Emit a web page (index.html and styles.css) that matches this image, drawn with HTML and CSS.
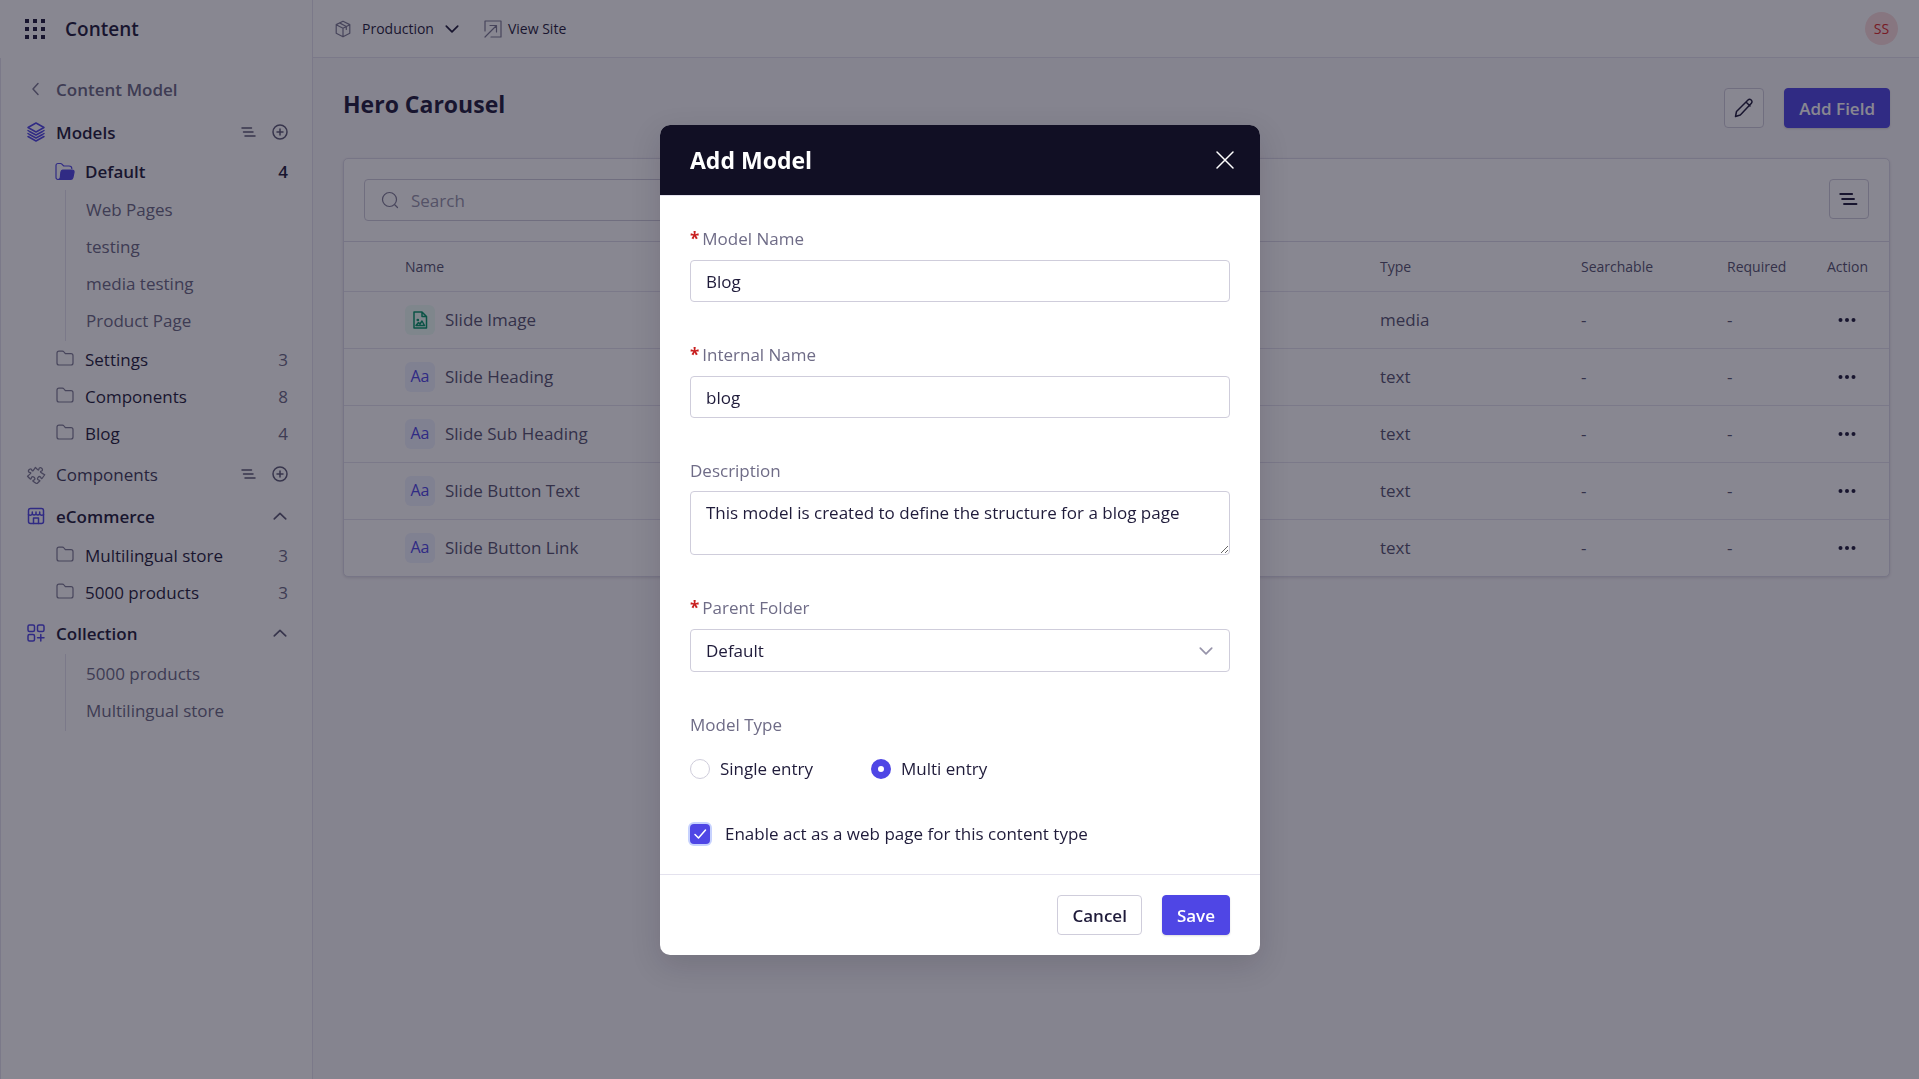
FILE: index.html
```html
<!DOCTYPE html>
<html lang="en">
<head>
  <meta charset="UTF-8">
  <meta name="viewport" content="width=device-width, initial-scale=1">
  <title>Content - Hero Carousel</title>
  <link rel="stylesheet" href="styles.css">
</head>
<body>

  <!-- Shared icons -->
  <svg class="sprite" aria-hidden="true">
    <symbol id="i-folder" viewBox="0 0 20 20">
      <path d="M2 5.200C2 4 2.800 3.200 4 3.200h3.400c.7 0 1.200.3 1.600.8l.9 1.100c.3.400.7.600 1.200.600H16c1.200 0 2 .8 2 2V15c0 1.200-.8 2-2 2H4c-1.200 0-2-.8-2-2z"/>
    </symbol>
    <symbol id="i-list" viewBox="0 0 16 16">
      <path d="M1 4h9.500M2.500 8h9.500M4 12h10"/>
    </symbol>
    <symbol id="i-plus" viewBox="0 0 16 16">
      <circle cx="8" cy="8" r="7"/><path d="M8 5v6M5 8h6"/>
    </symbol>
    <symbol id="i-up" viewBox="0 0 14 14">
      <path d="M2 9.500L7 4.800 12 9.500"/>
    </symbol>
    <symbol id="i-down" viewBox="0 0 14 14">
      <path d="M2 4.500L7 9.500 12 4.500"/>
    </symbol>
    <symbol id="i-dots" viewBox="0 0 18 6">
      <circle cx="2.500" cy="3" r="2"/><circle cx="9" cy="3" r="2"/><circle cx="15.500" cy="3" r="2"/>
    </symbol>
  </svg>

  <div class="app">

    <!-- Sidebar -->
    <aside class="sidebar">
      <div class="brand">
        <svg class="icon-20 fill" viewBox="0 0 20 20"><path d="M0 0h4v4H0zM8 0h4v4H8zM16 0h4v4h-4zM0 8h4v4H0zM8 8h4v4H8zM16 8h4v4h-4zM0 16h4v4H0zM8 16h4v4H8zM16 16h4v4h-4z"/></svg>
        <span>Content</span>
      </div>

      <nav class="nav">
        <a href="#" class="section back">
          <svg class="icon-20" viewBox="0 0 20 20"><path d="M12 4.500L7 10l5 5.500"/></svg>
          <span class="name">Content Model</span>
        </a>

        <div class="section active">
          <svg class="icon-20 brand-color" viewBox="0 0 20 20"><path d="M10 1l8 4.500-8 4.500-8-4.500zM2 8.500l1.500 1L10 13l6.500-3.500 1.500-1M2 11.500l1.500 1L10 16l6.500-3.500 1.500-1M2 14.500l8 4.500 8-4.500"/></svg>
          <a href="#" class="name">Models</a>
          <button type="button" class="plain" aria-label="Sort models"><svg class="icon-16"><use href="#i-list"/></svg></button>
          <button type="button" class="plain" aria-label="Add model"><svg class="icon-16"><use href="#i-plus"/></svg></button>
        </div>
        <div class="folders">
          <a href="#" class="folder open">
            <svg class="icon-20" viewBox="0 0 20 20"><path d="M3 17.500c-1.300 0-2-.8-2-2V3.500c0-1.200.8-2 2-2h2.500c.6 0 1 .2 1.400.6l1.200 1.300c.3.400.8.600 1.300.600H14c1.700 0 2.800 1 2.800 2.500"/><path class="solid" d="M7.500 8H17c1.500 0 2.300 1 2 2.400l-1.100 5.200c-.3 1.300-1 1.900-2.200 1.900H3c1.500 0 2-.6 2.300-1.900L5.900 10c.2-1.300.6-2 1.600-2z"/></svg>
            <span class="name">Default</span><span class="count">4</span>
          </a>
          <div class="children">
            <a href="#">Web Pages</a>
            <a href="#">testing</a>
            <a href="#">media testing</a>
            <a href="#">Product Page</a>
          </div>
          <a href="#" class="folder"><svg class="icon-20"><use href="#i-folder"/></svg><span class="name">Settings</span><span class="count">3</span></a>
          <a href="#" class="folder"><svg class="icon-20"><use href="#i-folder"/></svg><span class="name">Components</span><span class="count">8</span></a>
          <a href="#" class="folder"><svg class="icon-20"><use href="#i-folder"/></svg><span class="name">Blog</span><span class="count">4</span></a>
        </div>

        <div class="section">
          <svg class="icon-20" viewBox="0 0 24 24"><path transform="rotate(40 12 12)" d="M14.250 6.087c0-.355.186-.676.401-.959.221-.29.349-.634.349-1.003 0-1.036-1.007-1.875-2.250-1.875s-2.250.84-2.250 1.875c0 .369.128.713.349 1.003.215.283.401.604.401.959a.64.64 0 0 1-.657.643 48.390 48.390 0 0 1-4.163-.3c.186 1.613.293 3.250.315 4.907a.656.656 0 0 1-.658.663c-.355 0-.676-.186-.959-.401a1.647 1.647 0 0 0-1.003-.349c-1.036 0-1.875 1.007-1.875 2.250s.84 2.250 1.875 2.250c.369 0 .713-.128 1.003-.349.283-.215.604-.401.959-.401.31 0 .555.26.532.57a48.039 48.039 0 0 1-.642 5.056c1.518.19 3.058.309 4.616.354a.64.64 0 0 0 .657-.643c0-.355-.186-.676-.401-.959a1.647 1.647 0 0 1-.349-1.003c0-1.035 1.008-1.875 2.250-1.875 1.243 0 2.250.84 2.250 1.875 0 .369-.128.713-.349 1.003-.215.283-.4.604-.4.959 0 .333.277.599.61.58a48.100 48.100 0 0 0 5.427-.63 48.050 48.050 0 0 0 .582-4.717.532.532 0 0 0-.533-.57c-.355 0-.676.186-.959.401-.29.221-.634.349-1.003.349-1.035 0-1.875-1.007-1.875-2.250s.84-2.250 1.875-2.250c.37 0 .713.128 1.003.349.283.215.604.401.96.401a.656.656 0 0 0 .658-.663 48.422 48.422 0 0 0-.37-5.360c-1.886.342-3.810.574-5.766.689a.578.578 0 0 1-.61-.58z"/></svg>
          <a href="#" class="name">Components</a>
          <button type="button" class="plain" aria-label="Sort components"><svg class="icon-16"><use href="#i-list"/></svg></button>
          <button type="button" class="plain" aria-label="Add component"><svg class="icon-16"><use href="#i-plus"/></svg></button>
        </div>

        <div class="section active">
          <svg class="icon-20 brand-color" viewBox="-1 -1 20 20"><rect x="1.500" y="1.500" width="15" height="15" rx="2"/><path d="M1.500 7.500c1.300 1 2.700 1 3.800-.5 1.100 1.300 2.600 1.300 3.700 0 1.100 1.300 2.600 1.300 3.700 0 1.100 1.500 2.500 1.500 3.800.5M5.300 7V5M9 7V5M12.700 7V5M6.500 16.500V11h5v5.500"/></svg>
          <a href="#" class="name">eCommerce</a>
          <button type="button" class="plain" aria-label="Collapse eCommerce"><svg class="icon-16"><use href="#i-up"/></svg></button>
        </div>
        <div class="folders">
          <a href="#" class="folder"><svg class="icon-20"><use href="#i-folder"/></svg><span class="name">Multilingual store</span><span class="count">3</span></a>
          <a href="#" class="folder"><svg class="icon-20"><use href="#i-folder"/></svg><span class="name">5000 products</span><span class="count">3</span></a>
        </div>

        <div class="section active">
          <svg class="icon-20 brand-color" viewBox="-1 -1 20 20"><rect x="1" y="1" width="6.500" height="6.500" rx="1.500"/><rect x="10.500" y="1" width="6.500" height="6.500" rx="1.500"/><rect x="1" y="10.500" width="6.500" height="6.500" rx="1.500"/><path d="M13.800 10.500v6.500M10.500 13.800H17"/></svg>
          <a href="#" class="name">Collection</a>
          <button type="button" class="plain" aria-label="Collapse Collection"><svg class="icon-16"><use href="#i-up"/></svg></button>
        </div>
        <div class="folders">
          <div class="children">
            <a href="#">5000 products</a>
            <a href="#">Multilingual store</a>
          </div>
        </div>
      </nav>
    </aside>

    <!-- Main area -->
    <div class="main">
      <header class="topbar">
        <button type="button" class="env">
          <svg class="icon-18 muted" viewBox="0 0 18 18"><path d="M9 1.200l6.800 3.400v8.600L9 16.800l-6.800-3.600V4.600zM2.200 4.800L9 8.300l6.800-3.500M9 8.300v8.500M5.500 2.900l6.800 3.600v3"/></svg>
          <span>Production</span>
          <svg class="icon-16"><use href="#i-down"/></svg>
        </button>
        <a href="#" class="view-site">
          <svg class="icon-18 muted" viewBox="0 0 18 18"><path d="M1 11V1h16v16H7M1 17L12 6M6 5.500h6.500V12"/></svg>
          View Site
        </a>
        <span class="avatar">SS</span>
      </header>

      <main class="page">
        <div class="page-head">
          <h1>Hero Carousel</h1>
          <button type="button" class="btn square" aria-label="Edit model">
            <svg class="icon-20" viewBox="0 0 20 20"><path d="M1.500 18.500l1-5L14 2c1-1 2.300-.8 3.200 0s1.100 2.200.2 3.200L6.300 17zM12 4l4 4"/></svg>
          </button>
          <button type="button" class="btn primary">Add Field</button>
        </div>

        <div class="card">
          <div class="toolbar">
            <label class="search">
              <svg class="icon-18" viewBox="0 0 18 18"><circle cx="8.500" cy="8.500" r="7"/><path d="M14 14l2.500 2.500"/></svg>
              <input type="search" placeholder="Search" aria-label="Search fields">
            </label>
            <button type="button" class="btn square" aria-label="Sort fields"><svg class="icon-20"><use href="#i-list"/></svg></button>
          </div>

          <table class="fields">
            <colgroup>
              <col class="c-handle"><col><col class="c-type"><col class="c-search"><col class="c-req"><col class="c-action">
            </colgroup>
            <thead>
              <tr><th></th><th>Name</th><th>Type</th><th>Searchable</th><th>Required</th><th>Action</th></tr>
            </thead>
            <tbody>
              <tr>
                <td></td>
                <td><div class="field-name"><span class="tag media"><svg class="icon-18" viewBox="0 0 18 18"><path d="M3 1h8l4.500 4.500V17H3zM11 1v4.500h4.500M5 14.500l2.500-3 1.500 1.500 2-3 2.500 4.500z"/><circle cx="6.800" cy="9" r=".6"/></svg></span>Slide Image</div></td>
                <td>media</td><td>-</td><td>-</td>
                <td><button type="button" class="more" aria-label="Actions"><svg><use href="#i-dots"/></svg></button></td>
              </tr>
              <tr>
                <td></td>
                <td><div class="field-name"><span class="tag">Aa</span>Slide Heading</div></td>
                <td>text</td><td>-</td><td>-</td>
                <td><button type="button" class="more" aria-label="Actions"><svg><use href="#i-dots"/></svg></button></td>
              </tr>
              <tr>
                <td></td>
                <td><div class="field-name"><span class="tag">Aa</span>Slide Sub Heading</div></td>
                <td>text</td><td>-</td><td>-</td>
                <td><button type="button" class="more" aria-label="Actions"><svg><use href="#i-dots"/></svg></button></td>
              </tr>
              <tr>
                <td></td>
                <td><div class="field-name"><span class="tag">Aa</span>Slide Button Text</div></td>
                <td>text</td><td>-</td><td>-</td>
                <td><button type="button" class="more" aria-label="Actions"><svg><use href="#i-dots"/></svg></button></td>
              </tr>
              <tr>
                <td></td>
                <td><div class="field-name"><span class="tag">Aa</span>Slide Button Link</div></td>
                <td>text</td><td>-</td><td>-</td>
                <td><button type="button" class="more" aria-label="Actions"><svg><use href="#i-dots"/></svg></button></td>
              </tr>
            </tbody>
          </table>
        </div>
      </main>
    </div>
  </div>

  <!-- Add Model dialog -->
  <div class="overlay">
    <form class="modal" role="dialog" aria-modal="true" aria-labelledby="modal-title">
      <div class="modal-head">
        <h2 id="modal-title">Add Model</h2>
        <button type="button" class="plain" aria-label="Close"><svg class="icon-20" viewBox="0 0 20 20"><path d="M2 2l16 16M18 2L2 18"/></svg></button>
      </div>

      <div class="modal-body">
        <div class="field required">
          <label for="model-name">Model Name</label>
          <input type="text" id="model-name" value="Blog" required>
        </div>
        <div class="field required">
          <label for="internal-name">Internal Name</label>
          <input type="text" id="internal-name" value="blog" required>
        </div>
        <div class="field">
          <label for="description">Description</label>
          <textarea id="description">This model is created to define the structure for a blog page</textarea>
        </div>
        <div class="field required">
          <label for="parent">Parent Folder</label>
          <div class="select">
            <select id="parent">
              <option>Default</option>
              <option>Settings</option>
              <option>Components</option>
              <option>Blog</option>
            </select>
            <svg class="icon-16"><use href="#i-down"/></svg>
          </div>
        </div>
        <fieldset class="field">
          <legend>Model Type</legend>
          <div class="radios">
            <label><input type="radio" name="type" value="single">Single entry</label>
            <label><input type="radio" name="type" value="multi" checked>Multi entry</label>
          </div>
        </fieldset>
        <label class="check">
          <span class="box">
            <input type="checkbox" checked>
            <svg viewBox="0 0 20 20"><path d="M5 10.500l3.500 3.500L15.500 6"/></svg>
          </span>
          Enable act as a web page for this content type
        </label>
      </div>

      <div class="modal-foot">
        <button type="button" class="btn">Cancel</button>
        <button type="submit" class="btn primary">Save</button>
      </div>
    </form>
  </div>

</body>
</html>
```
FILE: styles.css
```css
* {
  box-sizing: border-box;
  margin: 0;
  padding: 0;
}

body {
  font-family: 'Segoe UI', 'Open Sans', 'Noto Sans', sans-serif;
  font-size: 17px;
  line-height: 25px;
  color: #1f1b3a;
  background: #f9f8fb;
}

a {
  color: inherit;
  text-decoration: none;
}

button,
input,
textarea,
select {
  font: inherit;
  color: inherit;
}

button {
  cursor: pointer;
}

svg {
  display: block;
  flex: none;
  fill: none;
  stroke: currentColor;
  stroke-width: 1.5;
  stroke-linecap: round;
  stroke-linejoin: round;
}

.sprite { position: absolute; width: 0; height: 0; }
.icon-16 { width: 16px; height: 16px; }
.icon-18 { width: 18px; height: 18px; }
.icon-20 { width: 20px; height: 20px; }
.fill { fill: currentColor; stroke: none; }
.muted { color: #7d7a93; stroke-width: 1.2; }
.section .brand-color { color: #4f46e5; }

.plain {
  display: flex;
  border: none;
  background: none;
  color: #5d5a75;
}

.app {
  display: flex;
  min-height: 100vh;
}

/* Sidebar */
.sidebar {
  width: 313px;
  flex: none;
  background: #ffffff;
  border-right: 1px solid #e4e2ee;
}

.brand {
  display: flex;
  align-items: center;
  gap: 20px;
  height: 58px;
  padding-left: 25px;
  font-size: 19px;
  font-weight: 600;
}

.nav {
  min-height: calc(100vh - 58px);
  padding: 11px 24px 0 25px;
  border-left: 1px solid #e4e2ee;
}

.section {
  display: flex;
  align-items: center;
  gap: 10px;
  height: 42px;
  color: #7d7a93;
}

.section .name,
.folder .name {
  flex: 1;
}

.section .name {
  color: #3c3957;
}

.section .plain {
  margin-left: 5px;
}

.section.active .name {
  font-weight: 600;
  color: #1f1b3a;
}

.section.back {
  height: 40px;
  margin-bottom: 2px;
}

.section.back .name {
  font-weight: 600;
  color: #6b6883;
}

.folders {
  padding-bottom: 1px;
}

.folder {
  display: flex;
  align-items: center;
  gap: 10px;
  height: 37px;
  padding-left: 29px;
}

.folder svg {
  margin-bottom: 3px;
  color: #7d7a93;
  stroke-width: 1.2;
}

.folder .count {
  color: #6b6883;
}

.folder.open,
.folder.open .count {
  font-weight: 600;
  color: #1f1b3a;
}

.folder.open svg {
  margin-bottom: 0;
  color: #4f46e5;
}

.folder .solid {
  fill: currentColor;
}

.children {
  margin-left: 39px;
  padding: 1px 0 2px 20px;
  border-left: 1px solid #e4e2ee;
}

.children a {
  display: block;
  line-height: 37px;
  color: #6b6883;
}

/* Main */
.main {
  flex: 1;
  min-width: 0;
}

.topbar {
  display: flex;
  align-items: center;
  gap: 24px;
  height: 58px;
  padding: 0 21px;
  background: #ffffff;
  border-bottom: 1px solid #e4e2ee;
  font-size: 14px;
}

.env,
.view-site {
  display: flex;
  align-items: center;
  gap: 10px;
  border: none;
  background: none;
}

.view-site {
  gap: 6px;
}

.avatar {
  width: 33px;
  margin-left: auto;
  line-height: 33px;
  text-align: center;
  border-radius: 50%;
  background: #fddcdc;
  color: #dc2626;
}

.page {
  padding: 30px 29px 30px 30px;
}

.page-head {
  display: flex;
  align-items: center;
  gap: 20px;
  margin-bottom: 30px;
}

h1,
h2 {
  font-size: 23px;
  line-height: 32px;
  font-weight: 700;
}

h1 {
  flex: 1;
  align-self: flex-start;
}

.btn {
  height: 40px;
  padding: 0 14px;
  border: 1px solid #cfcddb;
  border-radius: 4px;
  background: #ffffff;
  font-weight: 600;
}

.btn.square {
  display: flex;
  align-items: center;
  justify-content: center;
  width: 40px;
  padding: 0;
}

.btn.primary {
  border-color: #4f46e5;
  background: #4f46e5;
  color: #ffffff;
  box-shadow: 0 1px 2px rgba(17, 15, 36, 0.15);
}

.card {
  border: 1px solid #dddbe8;
  border-radius: 5px;
  background: #ffffff;
  box-shadow: 0 1px 3px rgba(17, 15, 36, 0.12);
}

.toolbar {
  display: flex;
  justify-content: space-between;
  padding: 20px;
  border-bottom: 1px solid #dddbe8;
}

.search {
  display: flex;
  align-items: center;
  gap: 12px;
  width: 400px;
  height: 42px;
  padding: 0 16px;
  border: 1px solid #cfcddb;
  border-radius: 4px;
  color: #7d7a93;
}

.search svg {
  stroke-width: 1.2;
}

.search input {
  flex: 1;
  min-width: 0;
  border: none;
  outline: none;
  background: none;
}

.search input::placeholder {
  color: #9794aa;
}

.fields {
  width: 100%;
  table-layout: fixed;
  border-collapse: collapse;
  color: #56536f;
}

.c-handle { width: 61px; }
.c-type { width: 201px; }
.c-search { width: 146px; }
.c-req { width: 100px; }
.c-action { width: 62px; }

.fields th {
  height: 49px;
  font-size: 14px;
  font-weight: 400;
  text-align: left;
}

.fields td {
  height: 57px;
  border-top: 1px solid #e4e2ee;
}

.field-name {
  display: flex;
  align-items: center;
  gap: 10px;
}

.tag {
  display: flex;
  align-items: center;
  justify-content: center;
  width: 30px;
  height: 30px;
  border-radius: 6px;
  background: #eef2ff;
  color: #4f46e5;
  font-size: 16px;
}

.tag.media {
  background: #ecfdf5;
  color: #059669;
}

.more {
  display: block;
  padding: 10px 11px;
  border: none;
  background: none;
}

.more svg {
  width: 18px;
  height: 6px;
  fill: #1f1b3a;
  stroke: none;
}

/* Modal */
.overlay {
  position: fixed;
  inset: 0;
  display: flex;
  align-items: flex-start;
  justify-content: center;
  padding: 125px 0 0 1px;
  overflow: auto;
  background: rgba(17, 15, 36, 0.5);
}

.modal {
  width: 600px;
  border-radius: 10px;
  background: #ffffff;
  box-shadow: 0 10px 30px rgba(17, 15, 36, 0.15);
}

.modal-head {
  display: flex;
  align-items: center;
  justify-content: space-between;
  height: 71px;
  padding: 0 25px 0 30px;
  border-radius: 10px 10px 0 0;
  border-bottom: 1px solid #e4e2ee;
  background: #110f24;
  background-clip: padding-box;
  color: #ffffff;
}

.modal-head .plain {
  color: #ffffff;
}

.modal-body {
  padding: 30px 30px 28px;
}

.field {
  margin-bottom: 40px;
  border: none;
}

.field > label,
.field legend {
  display: block;
  margin-bottom: 8px;
  color: #6f6c87;
}

.field.required > label {
  margin-bottom: 9px;
}

.field.required > label::before {
  content: '*';
  margin-right: 3px;
  font-weight: 700;
  color: #c81e1e;
}

.field input[type="text"],
.field textarea,
.field select {
  display: block;
  width: 100%;
  height: 42px;
  padding: 0 15px;
  border: 1px solid #cfcddb;
  border-radius: 4px;
  outline: none;
  background: #ffffff;
}

.field textarea {
  height: 64px;
  padding: 8px 15px;
  resize: vertical;
}

.select {
  display: grid;
  align-items: center;
}

.select > * {
  grid-area: 1 / 1;
}

.select select {
  height: 43px;
  appearance: none;
}

.select svg {
  justify-self: end;
  margin-right: 16px;
  color: #9794aa;
  pointer-events: none;
}

.radios {
  display: flex;
  gap: 58px;
  padding-top: 11px;
}

.radios label {
  display: flex;
  align-items: center;
  gap: 10px;
}

.radios input {
  width: 20px;
  height: 20px;
  appearance: none;
  border: 1px solid #cfcddb;
  border-radius: 50%;
}

.radios input:checked {
  border: 7px solid #4f46e5;
}

.check {
  display: flex;
  align-items: center;
  gap: 15px;
}

.box {
  display: grid;
  width: 20px;
  height: 20px;
}

.box > * {
  grid-area: 1 / 1;
}

.box input {
  appearance: none;
  border-radius: 4px;
  background: #4f46e5;
  box-shadow: 0 0 0 2px #c7d2fe;
}

.box svg {
  z-index: 1;
  color: #ffffff;
  pointer-events: none;
}

.modal-foot {
  display: flex;
  justify-content: flex-end;
  gap: 20px;
  padding: 20px 30px;
  border-top: 1px solid #e4e2ee;
}
```
